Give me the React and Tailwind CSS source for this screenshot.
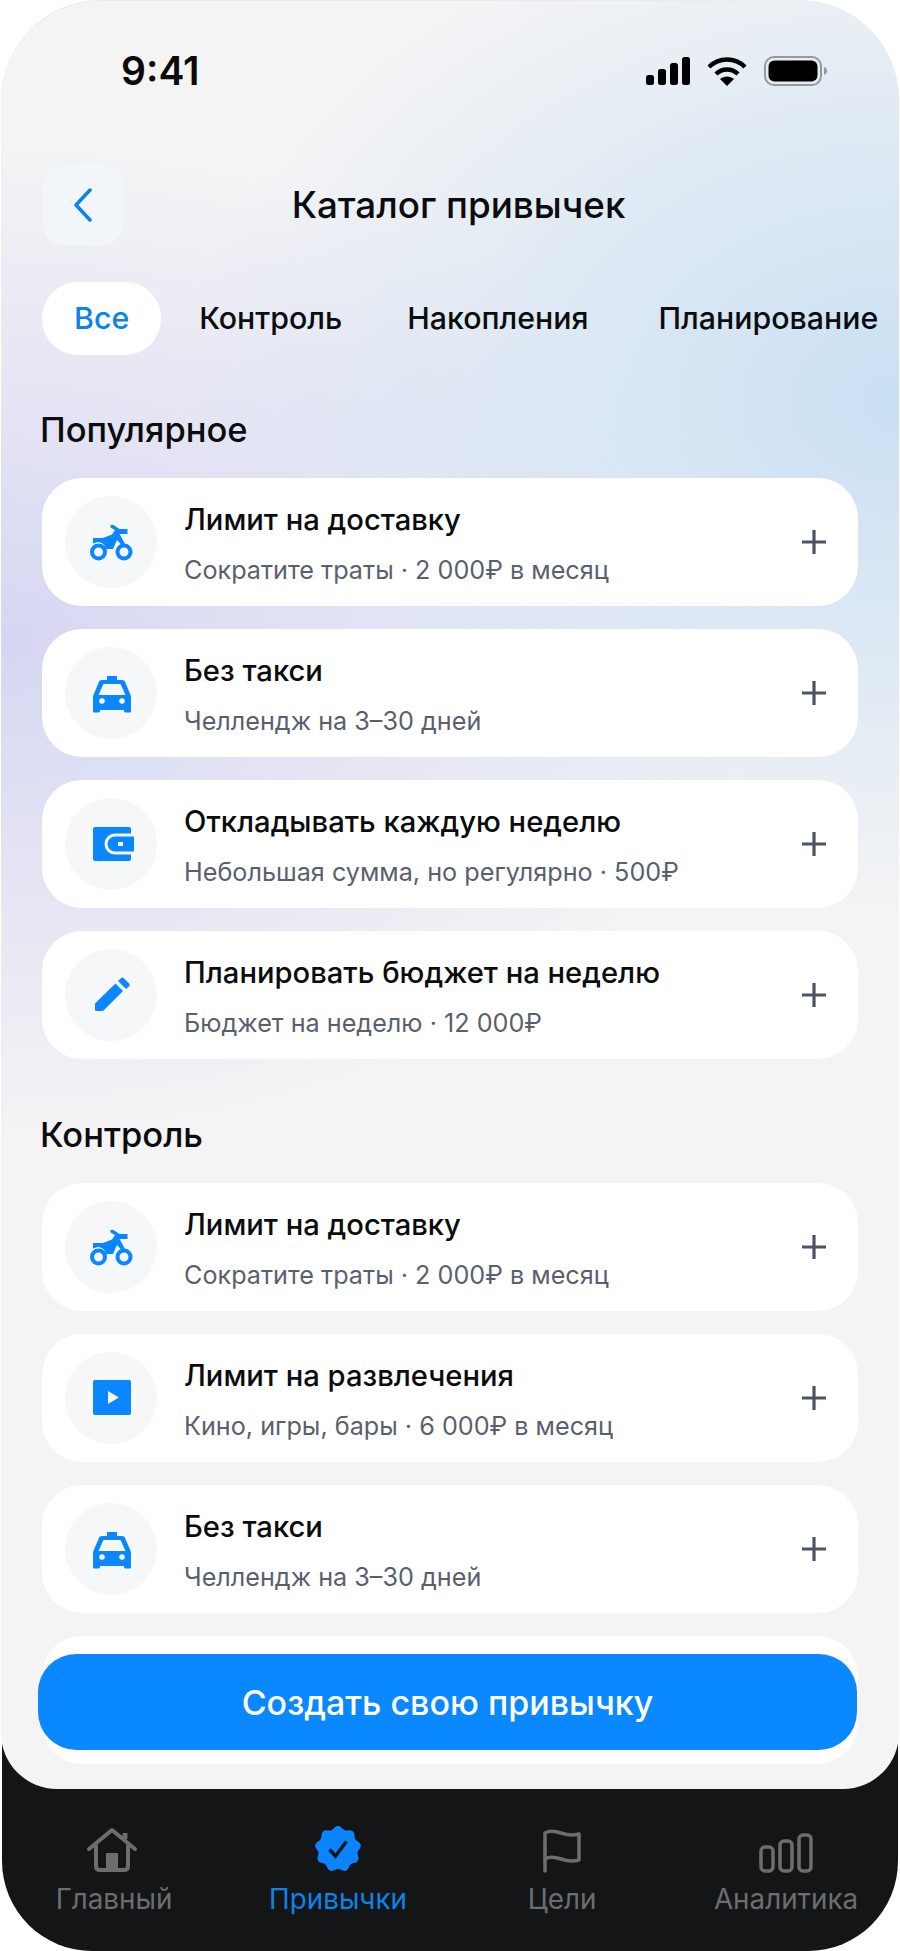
const popular = [
  { icon: 'moto', title: 'Лимит на доставку', sub: 'Сократите траты · 2 000₽ в месяц' },
  { icon: 'taxi', title: 'Без такси', sub: 'Челлендж на 3–30 дней' },
  { icon: 'wallet', title: 'Откладывать каждую неделю', sub: 'Небольшая сумма, но регулярно · 500₽' },
  { icon: 'pencil', title: 'Планировать бюджет на неделю', sub: 'Бюджет на неделю · 12 000₽' },
];

const control = [
  { icon: 'moto', title: 'Лимит на доставку', sub: 'Сократите траты · 2 000₽ в месяц' },
  { icon: 'play', title: 'Лимит на развлечения', sub: 'Кино, игры, бары · 6 000₽ в месяц' },
  { icon: 'taxi', title: 'Без такси', sub: 'Челлендж на 3–30 дней' },
];

// scalloped badge outline for the active tab
function badgePath(cx, cy, r, lobes) {
  const pts = [];
  for (let i = 0; i < 120; i++) {
    const a = (i / 120) * Math.PI * 2;
    const rr = r + 1.6 * Math.cos(a * lobes);
    pts.push(`${(cx + rr * Math.sin(a)).toFixed(2)} ${(cy - rr * Math.cos(a)).toFixed(2)}`);
  }
  return `M${pts.join('L')}Z`;
}

function HabitIcon({ name }) {
  const blue = '#0a86ff';
  const light = '#f5f7f9';
  return (
    <svg width="46" height="46" viewBox="0 0 46 46">
      {name === 'moto' && (
        <g fill={blue}>
          <circle cx="10.500" cy="33" r="6.500" fill="none" stroke={blue} strokeWidth="4" />
          <circle cx="36" cy="33" r="6.500" fill="none" stroke={blue} strokeWidth="4" />
          <path d="M5 19h10l9-3.500 3-4.500-4.500-2.500V6h3l6 4h8v5h-8l5.500 10-3 1.500L29 21l-4 9h-7c-1-4-4-6.800-8-7l-5 1.500z" />
        </g>
      )}
      {name === 'taxi' && (
        <g>
          <path fill={blue} d="M19 6h10v4h5c1.500 0 2.600.8 3.200 2.200L43 26v15a1.500 1.500 0 0 1-1.500 1.500h-4A1.500 1.500 0 0 1 36 41v-1H12v1a1.500 1.500 0 0 1-1.500 1.500h-4A1.500 1.500 0 0 1 5 41V26l5.800-13.800C11.400 10.800 12.500 10 14 10h5z" />
          <path fill={light} d="M15.500 14h17l5 11h-27z" />
          <circle cx="14" cy="31" r="2.800" fill={light} />
          <circle cx="34" cy="31" r="2.800" fill={light} />
        </g>
      )}
      {name === 'wallet' && (
        <g>
          <rect x="5" y="6" width="38" height="34" rx="2" fill={blue} />
          <path d="M46 14H27a9 9 0 0 0 0 18h19" fill={blue} stroke={light} strokeWidth="3" />
          <rect x="30" y="21" width="5" height="4" fill={light} />
        </g>
      )}
      {name === 'pencil' && (
        <g fill={blue}>
          <path d="M7 31.500 27.500 11.500 35 19 15 39H8.500A1.500 1.500 0 0 1 7 37.500z" />
          <path d="M30 9 33 6.200a2 2 0 0 1 2.800 0l5.300 5.300a2 2 0 0 1 0 2.800L38 17z" />
        </g>
      )}
      {name === 'play' && (
        <g>
          <rect x="5" y="5" width="38" height="35" rx="2" fill={blue} />
          <path d="M20 16 31 22.500 20 29z" fill={light} />
        </g>
      )}
    </svg>
  );
}

function HabitCard({ item }) {
  return (
    <div className="flex h-[128px] items-center rounded-[40px] bg-white pl-[23px] pr-[31px]">
      <div className="flex h-[92px] w-[92px] shrink-0 items-center justify-center rounded-full bg-[#f5f7f9]">
        <HabitIcon name={item.icon} />
      </div>
      <div className="ml-[27px] flex-1 pt-[5px]">
        <div className="text-[29.2px] leading-[38px] font-medium text-[#0b0c0e]">{item.title}</div>
        <div className="mt-[13px] text-[25.2px] leading-[36px] text-[#5a5f6e]">{item.sub}</div>
      </div>
      <svg width="26" height="26" viewBox="0 0 26 26" stroke="#4d5266" strokeWidth="3.200">
        <path d="M13 1v24M1 13h24" />
      </svg>
    </div>
  );
}

function StatusBar() {
  return (
    <div className="flex h-[163px] items-start justify-between pl-[120px] pr-[71px] pt-[48px]">
      <span className="text-[39px] leading-[44px] font-semibold text-[#0a0a0a]">9:41</span>
      <div className="mt-[7px] flex items-center gap-[16px]">
        <svg width="45" height="28" viewBox="0 0 45 28" fill="#000">
          <rect x="0" y="18" width="8" height="10" rx="2.500" />
          <rect x="12" y="12" width="8" height="16" rx="2.500" />
          <rect x="24" y="6" width="8" height="22" rx="2.500" />
          <rect x="36" y="0" width="8" height="28" rx="2.500" />
        </svg>
        <svg width="40" height="30" viewBox="0 0 40 30" fill="none" stroke="#000" strokeWidth="4.500">
          <path d="M2 11C12 1 28 1 38 11" />
          <path d="M9 18c6-6 16-6 22 0" />
          <path d="M20 30l-7-7c4-3.500 10-3.500 14 0z" fill="#000" stroke="none" />
        </svg>
        <svg width="64" height="30" viewBox="0 0 64 30" className="ml-[1px]">
          <rect x="1" y="1" width="56" height="28" rx="9" fill="none" stroke="#96999d" strokeWidth="2" />
          <rect x="4.500" y="4.500" width="49" height="21" rx="6" fill="#000" />
          <path d="M60 11c2 .6 3 2.200 3 4s-1 3.400-3 4z" fill="#96999d" />
        </svg>
      </div>
    </div>
  );
}

function NavItem({ label, active, children }) {
  return (
    <div className="flex flex-col items-center">
      <div className="flex h-[48px] items-end justify-center">{children}</div>
      <div className={`mt-[9px] text-[27.8px] leading-[34px] ${active ? 'text-[#0a84e8]' : 'text-[#6c6d6f]'}`}>{label}</div>
    </div>
  );
}

export default function App() {
  return (
    <div className="h-[1951px] w-[900px] overflow-hidden bg-white font-['Inter',sans-serif]">
      <div className="relative z-10 mx-[1px] h-[1789px] overflow-hidden rounded-t-[100px] rounded-b-[56px] border-t border-[#e8eaed] bg-[#f4f4f5] bg-[radial-gradient(ellipse_720px_520px_at_900px_400px,#c9dff3_0%,#c9dff300_100%),radial-gradient(ellipse_760px_500px_at_0px_640px,#d6d6f3_0%,#d6d6f300_100%)]">
        <StatusBar />

        <div className="relative flex h-[82px] items-center justify-center pl-[41px]">
          <div className="absolute left-[41px] top-0 flex h-[82px] w-[82px] items-center justify-center rounded-[24px] bg-[#f2f5f9]">
            <svg width="22" height="34" viewBox="0 0 22 34" fill="none" stroke="#0a84e8" strokeWidth="3.500" strokeLinecap="round" strokeLinejoin="round">
              <path d="M18 2 4 17l14 15" />
            </svg>
          </div>
          <h1 className="ml-[-24px] text-[36.8px] leading-[44px] font-medium text-[#0b0c0e]">Каталог привычек</h1>
        </div>

        <div className="mt-[36px] flex items-center gap-[6px] pl-[41px] text-[30.3px] font-medium whitespace-nowrap">
          <div className="flex h-[73px] items-center rounded-[36px] bg-white px-[32px] text-[#0a84e8]">Все</div>
          <div className="pl-[32px] pr-[27px] text-[#0b0c0e]">Контроль</div>
          <div className="px-[32px] text-[#0b0c0e]">Накопления</div>
          <div className="px-[32px] text-[#0b0c0e]">Планирование</div>
        </div>

        <div className="px-[41px]">
          <h2 className="ml-[-2px] mt-[55px] text-[34.5px] leading-[40px] font-medium text-[#0b0c0e]">Популярное</h2>
          <div className="mt-[28px] flex flex-col gap-[23px]">
            {popular.map((item) => (
              <HabitCard key={item.title} item={item} />
            ))}
          </div>

          <h2 className="ml-[-2px] mt-[56px] text-[34.5px] leading-[40px] font-medium text-[#0b0c0e]">Контроль</h2>
          <div className="mt-[28px] flex flex-col gap-[23px]">
            {control.map((item) => (
              <HabitCard key={item.title} item={item} />
            ))}
            <div className="h-[128px] rounded-[40px] bg-white" />
          </div>
        </div>

        <div className="absolute left-[37px] top-[1653px] flex h-[96px] w-[819px] items-center justify-center rounded-[38px] bg-[#0a88ff] text-[34px] font-medium text-white">
          Создать свою привычку
        </div>
      </div>

      <div className="mx-[2px] -mt-[80px] grid h-[242px] grid-cols-4 rounded-b-[90px] bg-[#141517] pt-[116px]">
        <NavItem label="Главный">
          <svg width="50" height="46" viewBox="0 0 50 46" fill="none" stroke="#6c6d6f" strokeWidth="4" strokeLinecap="round" strokeLinejoin="round" className="-translate-x-[2px]">
            <path d="M2 22 25 3l23 19" />
            <path d="M38 12V6" strokeWidth="5" strokeLinecap="butt" />
            <path d="M9 19v20c0 3 1.500 4 4 4h24c2.500 0 4-1 4-4V19" />
            <rect x="19" y="26" width="12" height="17" fill="#6c6d6f" stroke="none" />
          </svg>
        </NavItem>
        <NavItem label="Привычки" active>
          <svg width="46" height="48" viewBox="0 0 46 48">
            <path fill="#0a84ff" d={badgePath(23, 24, 21.500, 9)} />
            <path d="M14.500 24.500 20.500 31 31.500 16.500" fill="none" stroke="#141517" strokeWidth="3.500" />
          </svg>
        </NavItem>
        <NavItem label="Цели">
          <svg width="38" height="44" viewBox="0 0 38 44" fill="none" stroke="#6c6d6f" strokeWidth="3.500" strokeLinecap="round" strokeLinejoin="round">
            <path d="M2 42V4c5-3 10-2 16 0s11 3 18 1v26c-7 2-12 1-18-1S7 27 2 30" />
          </svg>
        </NavItem>
        <NavItem label="Аналитика">
          <svg width="54" height="40" viewBox="0 0 54 40" fill="none" stroke="#6c6d6f" strokeWidth="3.500">
            <rect x="2" y="14" width="12" height="24" rx="4" />
            <rect x="21" y="8" width="12" height="30" rx="4" />
            <rect x="40" y="2" width="12" height="36" rx="4" />
          </svg>
        </NavItem>
      </div>
    </div>
  );
}
